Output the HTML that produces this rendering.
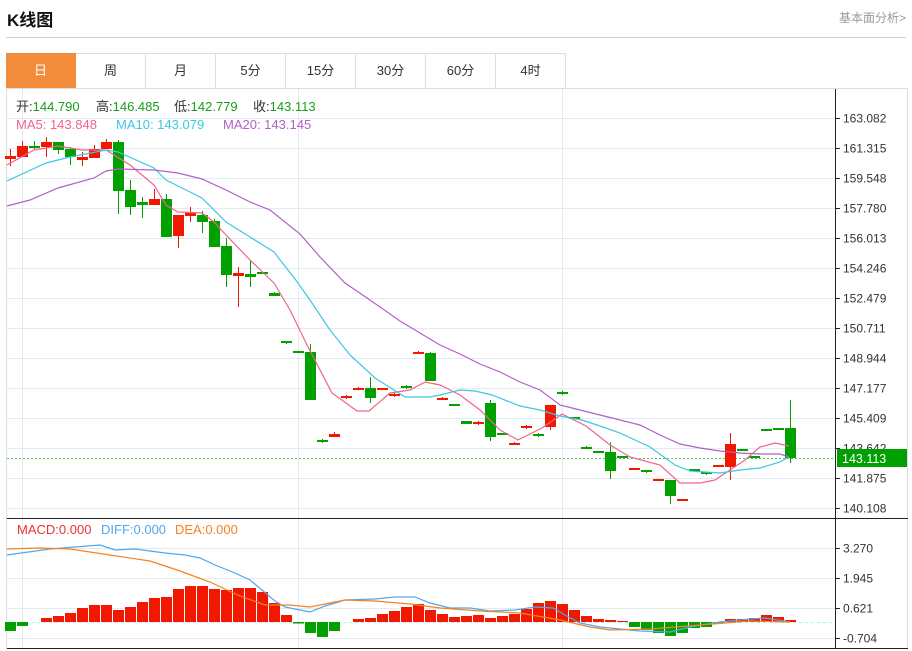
<!DOCTYPE html>
<html><head><meta charset="utf-8"><style>
body{margin:0;width:912px;height:651px;background:#fff;font-family:"Liberation Sans","Noto Sans CJK SC",sans-serif;position:relative;overflow:hidden}
.t{position:absolute;left:7px;top:6px;font-size:17px;font-weight:bold;color:#111}
.r{position:absolute;right:6px;top:9px;font-size:12px;color:#999}
.hr{position:absolute;left:6px;right:6px;top:37px;border-top:1px solid #ccc}
.tabs{position:absolute;left:6px;top:53px;height:35px;display:flex}
.tabs div{width:69px;height:34px;border:1px solid #ddd;border-left:none;text-align:center;line-height:34px;font-size:13px;color:#333}
.tabs div:first-child{background:#f28c3b;color:#fff;border-color:#f28c3b}
svg{position:absolute;left:0;top:0}
</style></head><body>
<div class="t">K线图</div><div class="r">基本面分析&gt;</div><div class="hr"></div>
<div class="tabs"><div>日</div><div>周</div><div>月</div><div>5分</div><div>15分</div><div>30分</div><div>60分</div><div>4时</div></div>
<svg id="s" width="912" height="651" font-family="Liberation Sans, Noto Sans CJK SC, sans-serif">
<g stroke="#e3eaf0" stroke-width="1">
<line x1="22.5" y1="89" x2="22.5" y2="648"/><line x1="298.5" y1="89" x2="298.5" y2="648"/><line x1="562.5" y1="89" x2="562.5" y2="648"/>
</g>
<g id="grid" stroke="#e3eaf0"></g>
<rect x="6.5" y="88.5" width="901" height="560" fill="none" stroke="#ddd"/>
<line x1="835.5" y1="89" x2="835.5" y2="648" stroke="#222"/>
<line x1="7" y1="518.5" x2="908" y2="518.5" stroke="#222"/>
<line x1="7" y1="648.5" x2="908" y2="648.5" stroke="#222"/>
<g id="lab" font-size="12" fill="#333"></g>
<line x1="7" y1="458.5" x2="835" y2="458.5" stroke="#5c5" stroke-dasharray="2,2"/>
<line x1="7" y1="622.5" x2="835" y2="622.5" stroke="#aee" stroke-dasharray="3,3"/>
<g id="c"></g>
<polyline fill="none" stroke="#f0658a" stroke-width="1.2" points="7,165 34,150 58,146 82,150 106,150 130,165 154,185 166,205 178,212 202,213 214,222 226,235 250,260 274,283 290,310 307,345 332,393 357,411 369,411 390,393 410,390 425,382 440,385 460,395 480,410 500,430 518,440 542,428 562,414 586,426 610,445 630,457 660,465 680,483 700,483 715,480 730,470 745,460 760,447 775,443 789,446"/>
<polyline fill="none" stroke="#3cc8e0" stroke-width="1.2" points="7,181 46,163 70,157 106,150 118,152 154,168 166,180 178,186 202,198 226,222 250,237 274,252 298,283 310,300 330,330 350,355 375,378 405,397 430,397 440,395 460,390 475,391 492,395 520,406 540,410 560,416 582,420 600,426 620,433 650,447 675,465 690,471 720,473 740,470 760,468 780,462 789,457"/>
<polyline fill="none" stroke="#b060c8" stroke-width="1.2" points="7,206 30,200 58,188 94,178 106,171 118,169 154,170 178,173 202,179 226,190 250,202 270,210 300,234 320,257 345,283 370,300 400,321 440,345 460,354 480,364 500,372 520,382 540,390 560,405 580,410 600,415 620,420 640,425 660,435 680,444 700,448 720,451 740,453 760,454 780,454 789,457"/>
<polyline fill="none" stroke="#4fa8f0" stroke-width="1.2" points="7,555 50,549 100,545 115,550 135,549 150,551 165,553 185,555 200,558 215,565 235,573 250,580 262,590 275,601 285,607 300,610 310,612 325,606 345,600 375,599 395,597 415,597 430,603 450,608 470,608 490,611 515,610 535,607 553,608 565,615 580,623 600,627 640,631 670,632 690,627 720,622 750,619 765,618 790,622"/>
<polyline fill="none" stroke="#f58220" stroke-width="1.2" points="7,549 40,548 70,549 110,555 150,561 180,571 210,582 240,596 265,605 290,605 310,607 345,600 375,601 410,604 440,608 480,611 520,613 560,620 590,627 610,630 650,629 700,625 750,621 790,622"/>
<rect x="837" y="449" width="70" height="18" fill="#00a000"/>
<text x="842" y="463" font-size="12.5" fill="#fff">143.113</text>
<g font-size="13">
<text x="16" y="111" fill="#333">开:<tspan fill="#1a9e1a">144.790</tspan></text>
<text x="96" y="111" fill="#333">高:<tspan fill="#1a9e1a">146.485</tspan></text>
<text x="174" y="111" fill="#333">低:<tspan fill="#1a9e1a">142.779</tspan></text>
<text x="253" y="111" fill="#333">收:<tspan fill="#1a9e1a">143.113</tspan></text>
<text x="16" y="129" fill="#f0658a">MA5: 143.848</text>
<text x="116" y="129" fill="#3cc8e0">MA10: 143.079</text>
<text x="223" y="129" fill="#b060c8">MA20: 143.145</text>
<text x="17" y="534" fill="#f03030">MACD:0.000</text>
<text x="101" y="534" fill="#4fa8f0">DIFF:0.000</text>
<text x="175" y="534" fill="#f58220">DEA:0.000</text>
</g>
</svg>
<script>
var N="http://www.w3.org/2000/svg",g=document.getElementById('grid'),lab=document.getElementById('lab'),c=document.getElementById('c');
function el(p,t,a){var e=document.createElementNS(N,t);for(var k in a)e.setAttribute(k,a[k]);p.appendChild(e);return e}
var pl=["163.082","161.315","159.548","157.780","156.013","154.246","152.479","150.711","148.944","147.177","145.409","143.642","141.875","140.108"];
pl.forEach(function(s,i){var y=118+i*30;el(g,'line',{x1:7,y1:y+.5,x2:835,y2:y+.5});el(lab,'line',{x1:835,y1:y+.5,x2:840,y2:y+.5,stroke:'#222'});var t=el(lab,'text',{x:843,y:y+4.5});t.textContent=s});
["3.270","1.945","0.621","-0.704"].forEach(function(s,i){var y=548+i*30;el(g,'line',{x1:7,y1:y+.5,x2:835,y2:y+.5});el(lab,'line',{x1:835,y1:y+.5,x2:840,y2:y+.5,stroke:'#222'});var t=el(lab,'text',{x:843,y:y+4.5});t.textContent=s});
var R='#f01800',G='#00a000';
var K=[[156,159,149,166,R],[146,157,141,157,R],[146,147,141,149,G],[142,147,137,157,R],[142,150,142,154,G],[149,157,147,165,G],[157,160,152,166,R],[149,158,145,158,R],[142,149,139,149,R],[142,191,140,214,G],[190,207,180,215,G],[202,205,197,218,G],[199,205,189,205,R],[199,237,194,237,G],[215,236,215,248,R],[213,216,207,222,R],[215,222,211,233,G],[221,247,219,247,G],[246,275,238,287,G],[273,276,267,307,R],[274,277,260,287,G],[272,273,272,273,G],[293,296,292,296,G],[341,343,341,344,G],[351,353,351,353,G],[352,400,344,400,G],[440,442,439,443,G],[434,437,432,437,R],[396,398,395,399,R],[388,390,387,390,R],[388,398,377,403,G],[388,390,388,390,R],[394,396,393,397,R],[386,388,385,389,G],[352,354,351,354,R],[353,381,352,381,G],[398,400,397,400,R],[404,406,404,406,G],[421,424,421,424,G],[422,424,421,425,R],[403,437,400,441,G],[433,435,433,435,G],[443,445,442,445,R],[426,428,425,429,R],[434,436,433,437,G],[405,427,405,430,R],[392,394,391,395,G],[417,418,417,419,G],[447,449,446,449,G],[451,453,451,453,G],[452,471,442,479,G],[456,458,456,458,G],[468,470,468,470,R],[470,472,470,473,G],[479,481,479,481,R],[480,496,480,504,G],[499,501,499,501,R],[469,471,469,471,G],[472,474,472,475,G],[465,467,465,467,R],[444,467,433,480,R],[449,451,449,451,G],[456,458,456,458,G],[429,431,429,431,G],[428,430,428,430,G],[428,458,400,463,G]];
K.forEach(function(k,i){var x=10+12*i;el(c,'line',{x1:x+.5,y1:k[2],x2:x+.5,y2:k[3],stroke:k[4]});el(c,'rect',{x:x-5,y:k[0],width:11,height:Math.max(2,k[1]-k[0]),fill:k[4]})});
var M=[631,626,622,618,616,613,608,605,605,610,607,602,598,597,589,586,586,589,590,588,588,592,603,615,623.5,633,637,631,622,619,618,614,611,607,604,610,614,617,616,615,618,616,614,609,603,601,604,610,616,619,620,621,627,630,633,636,633,628,627,623.5,619,619,618,615,617,620];
M.forEach(function(y,i){var x=10+12*i;if(y==622)return;var col=y>622?G:R;el(c,'rect',{x:x-5,y:Math.min(y,622),width:11,height:Math.max(1,Math.abs(y-622)),fill:col})});
</script>
</body></html>
